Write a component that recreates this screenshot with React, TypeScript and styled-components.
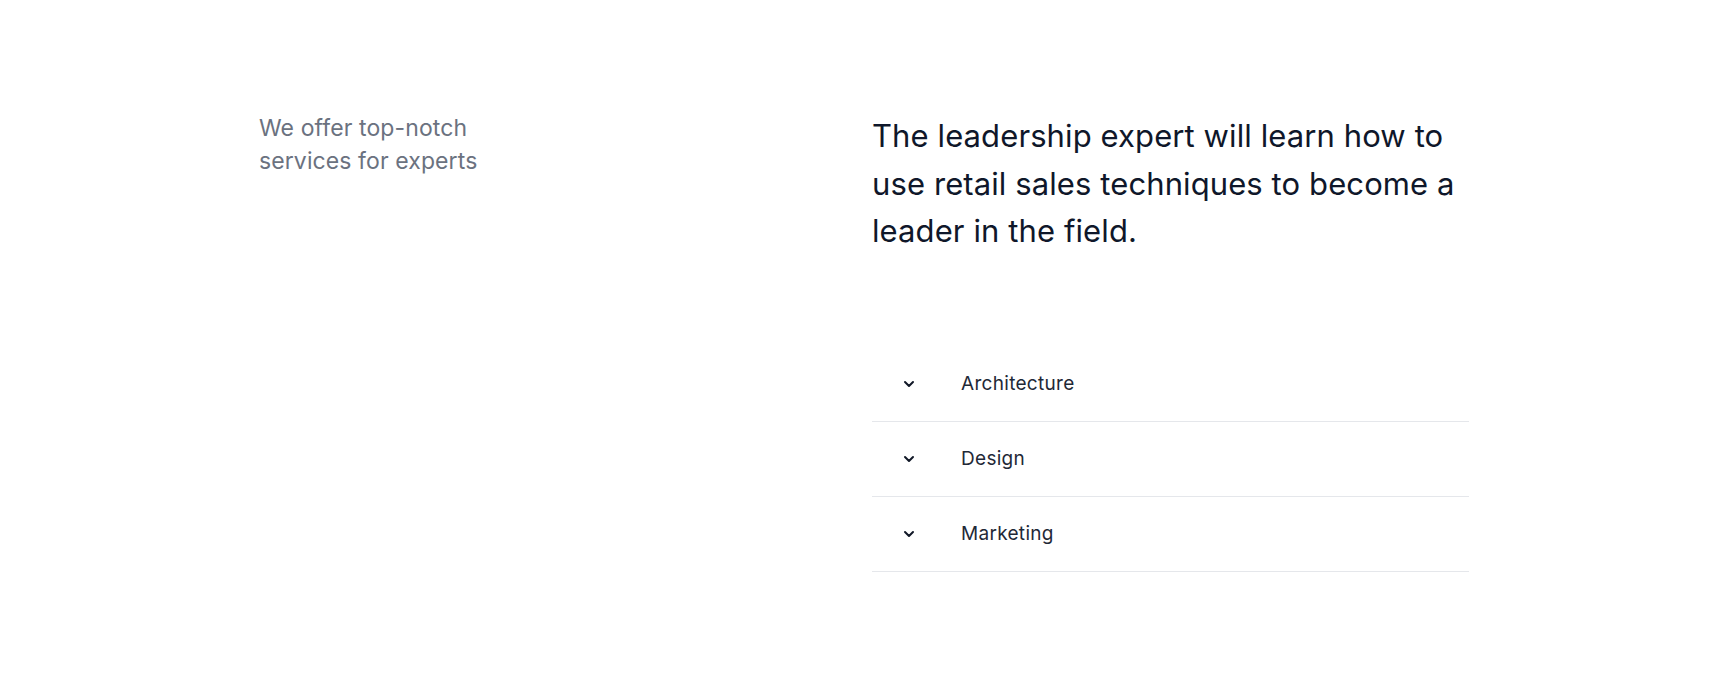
import React from "react";
import styled, { createGlobalStyle } from "styled-components";
import { ChevronDown } from "lucide-react";

const GlobalStyle = createGlobalStyle`
	* { box-sizing: border-box; }
	body {
		margin: 0;
		background: #ffffff;
		font-family: Inter, "Noto Sans", sans-serif;
	}
`;

const items = ["Architecture", "Design", "Marketing"];

export default function App() {
	const [open, setOpen] = React.useState<number | null>(null);

	return (
		<>
			<GlobalStyle />
			<Section>
				<Intro>
					We offer top-notch
					<br />
					services for experts
				</Intro>
				<Content>
					<Heading>
						The leadership expert will learn how to use retail sales techniques
						to become a leader in the field.
					</Heading>
					<Accordion>
						{items.map((item, index) => (
							<Item key={item}>
								<Trigger onClick={() => setOpen(open === index ? null : index)}>
									<IconCell $open={open === index}>
										<ChevronDown size={16} strokeWidth={3} />
									</IconCell>
									<Title>{item}</Title>
								</Trigger>
							</Item>
						))}
					</Accordion>
				</Content>
			</Section>
		</>
	);
}

const Section = styled.section`
	height: 689px;
	padding: 112px 259px 0;
	display: grid;
	grid-template-columns: 1fr 1fr;
	column-gap: 16px;
	align-items: start;
`;

const Intro = styled.p`
	margin: 0;
	font-size: 23px;
	line-height: 33px;
	font-weight: 400;
	color: #6b7280;
	letter-spacing: 0.1px;
`;

const Content = styled.div`
	display: flex;
	flex-direction: column;
`;

const Heading = styled.h2`
	margin: 0;
	font-size: 31px;
	line-height: 47.5px;
	font-weight: 400;
	color: #0f172a;
	letter-spacing: 0.1px;
	max-width: 597px;
`;

const Accordion = styled.div`
	margin-top: 92px;
	display: flex;
	flex-direction: column;
`;

const Item = styled.div`
	border-bottom: 1px solid #e5e7eb;
`;

const Trigger = styled.button`
	width: 100%;
	height: 74px;
	padding: 0;
	border: none;
	background: none;
	display: flex;
	align-items: center;
	gap: 15px;
	cursor: pointer;
	font-family: inherit;
	text-align: left;
`;

const IconCell = styled.span<{ $open?: boolean }>`
	width: 74px;
	display: flex;
	justify-content: center;
	color: #111827;
	transform: ${(props) => (props.$open ? "rotate(180deg)" : "none")};
`;

const Title = styled.span`
	font-size: 19px;
	color: #1f2937;
	font-weight: 400;
	letter-spacing: 0.3px;
`;
